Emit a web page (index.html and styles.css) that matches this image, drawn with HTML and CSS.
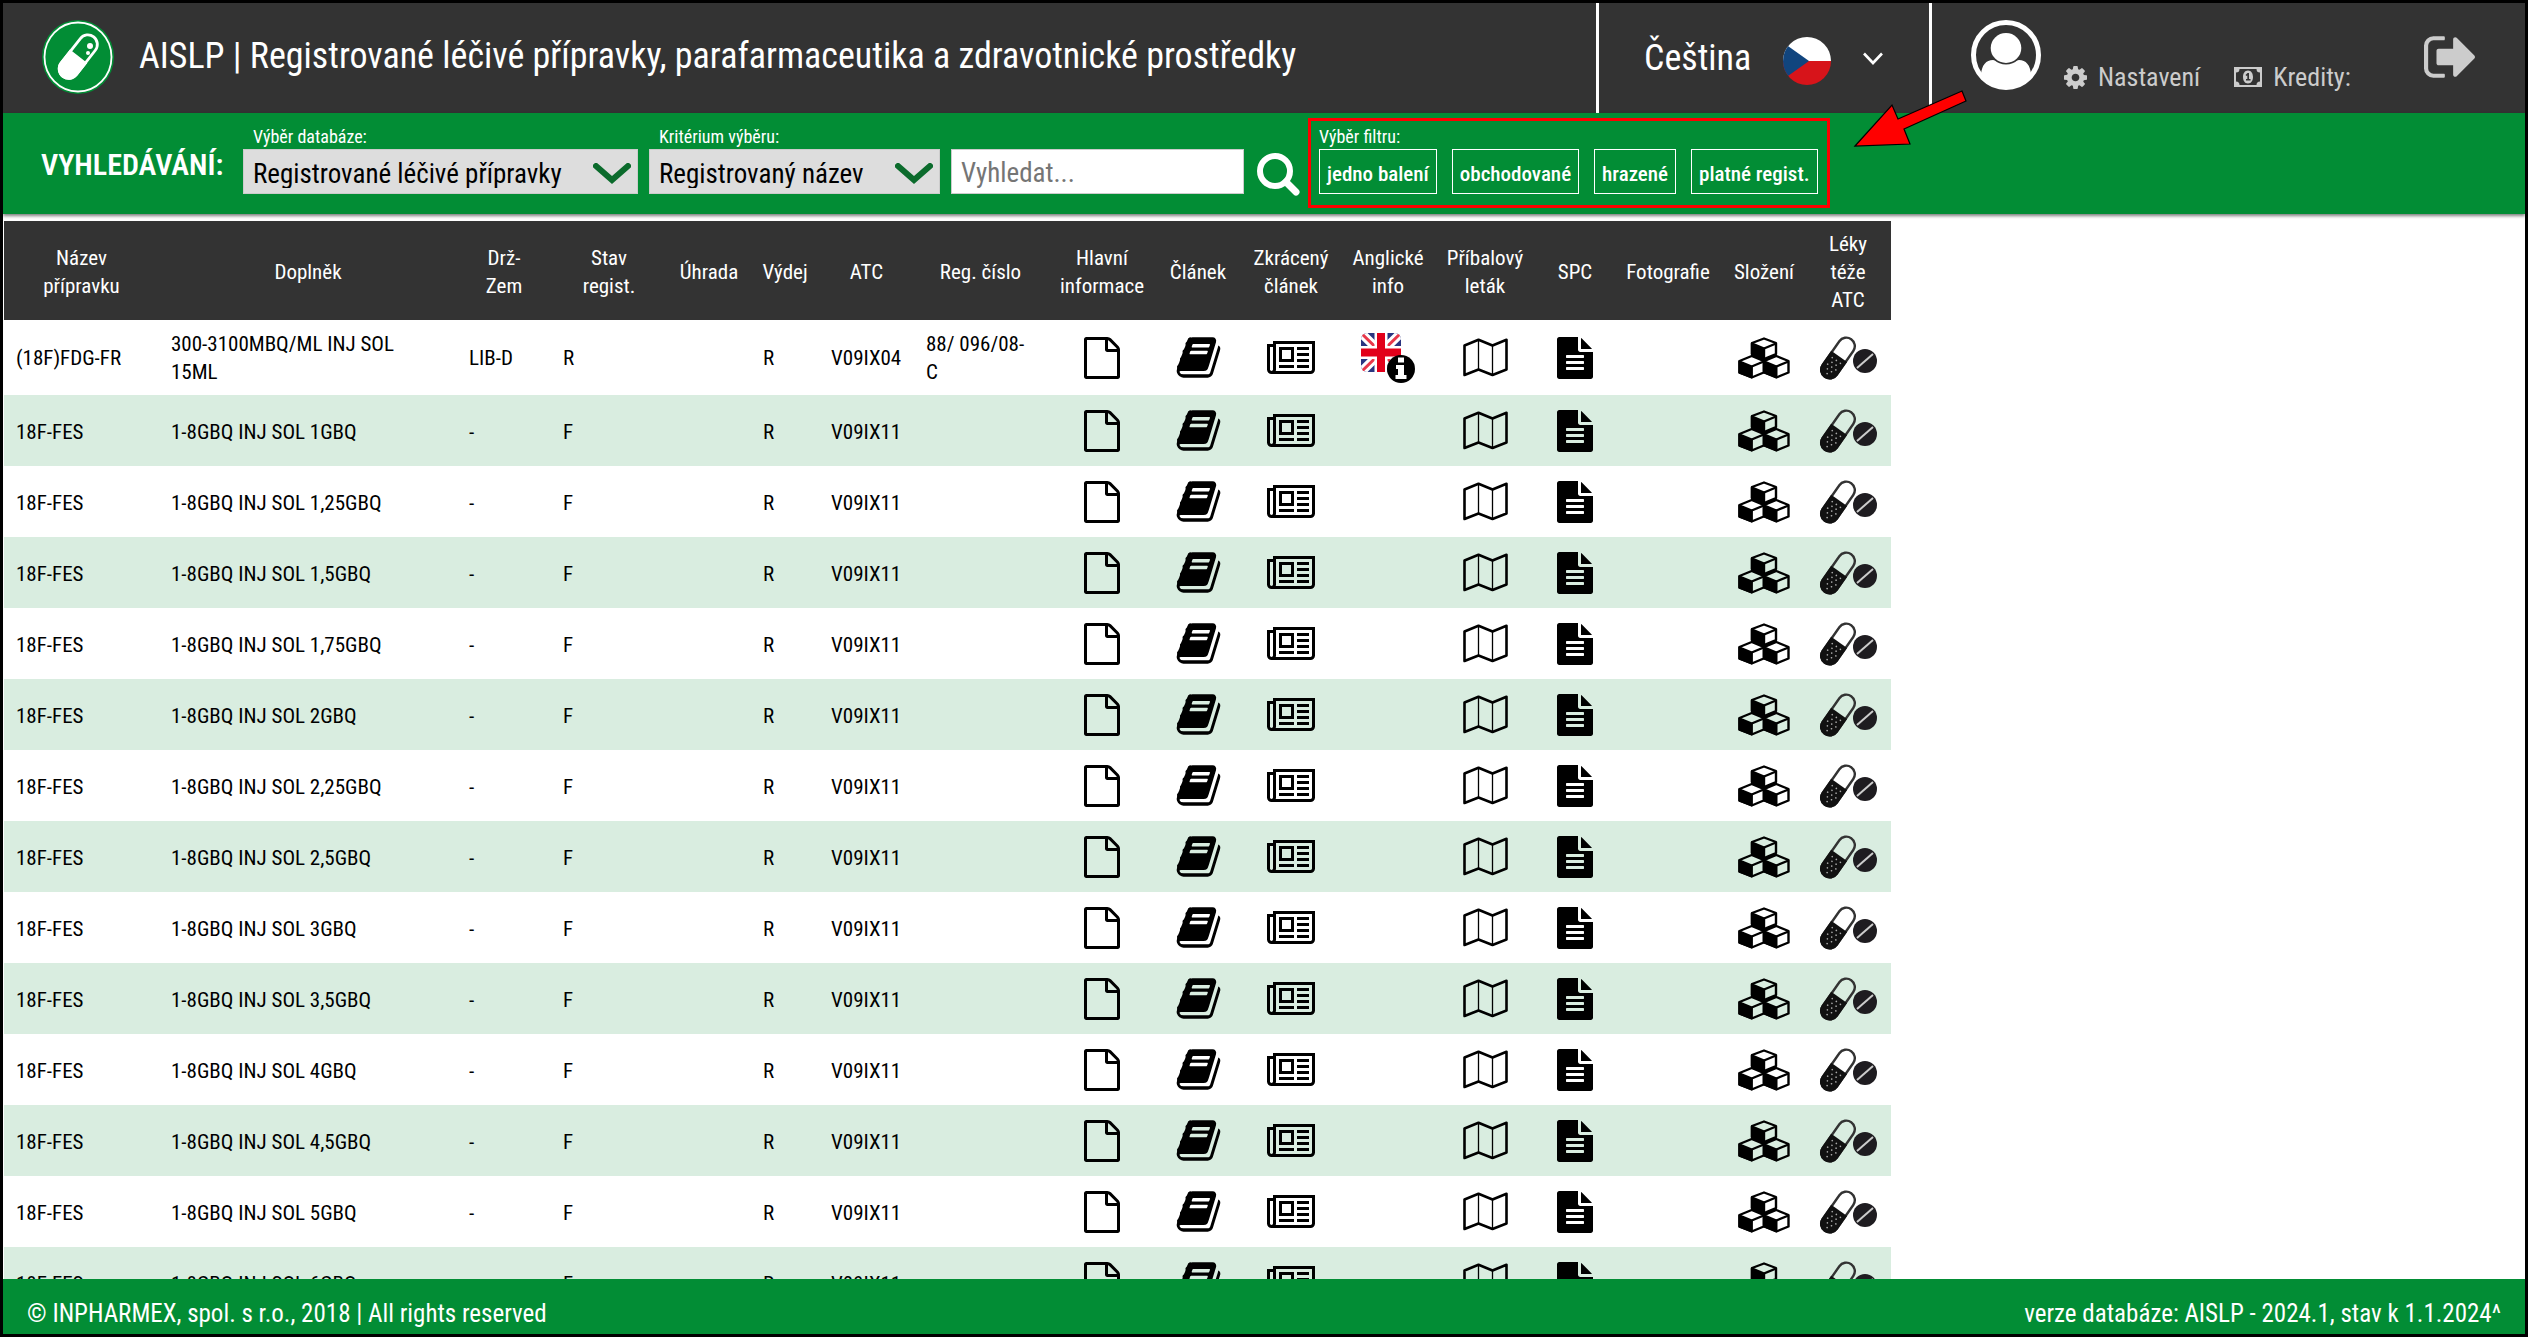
FILE: index.html
```html
<!DOCTYPE html>
<html lang="cs">
<head>
<meta charset="utf-8">
<meta name="viewport" content="width=device-width, initial-scale=1">
<title>AISLP</title>
<link rel="stylesheet" href="styles.css">
</head>
<body>
<svg class="sprite" aria-hidden="true">
  <symbol id="i-file" viewBox="128 0 1536 1792"><path d="M1596 380q28 28 48 76t20 88v1152q0 40-28 68t-68 28h-1344q-40 0-68-28t-28-68v-1600q0-40 28-68t68-28h896q40 0 88 20t76 48zm-444-244v376h376q-10-29-22-41l-313-313q-12-12-41-22zm384 1528v-1024h-416q-40 0-68-28t-28-68v-416h-768v1536h1280z"/></symbol>
  <symbol id="i-text" viewBox="128 0 1536 1792"><path d="M1596 476q14 14 28 36h-472v-472q22 14 36 28zm-476 164h544v1056q0 40-28 68t-68 28h-1344q-40 0-68-28t-28-68v-1600q0-40 28-68t68-28h800v544q0 40 28 68t68 28zm160 736v-64q0-14-9-23t-23-9h-704q-14 0-23 9t-9 23v64q0 14 9 23t23 9h704q14 0 23-9t9-23zm0-256v-64q0-14-9-23t-23-9h-704q-14 0-23 9t-9 23v64q0 14 9 23t23 9h704q14 0 23-9t9-23zm0-256v-64q0-14-9-23t-23-9h-704q-14 0-23 9t-9 23v64q0 14 9 23t23 9h704q14 0 23-9t9-23z"/></symbol>
  <symbol id="i-book" viewBox="0 0 1792 1792"><path d="M1703 478q40 57 18 129l-275 906q-19 64-76.500 107.500t-122.500 43.500h-923q-77 0-148.500-53.500t-99.500-131.500q-24-67-2-127 0-4 3-27t4-37q1-8-3-21.500t-3-19.500q2-11 8-21t16.500-23.500 16.500-23.500q23-38 45-91.500t30-91.500q3-10 .5-30t-.5-28q3-11 17-28t17-23q21-36 42-92t25-90q1-9-2.500-32t.5-28q4-13 22-30.500t22-22.500q19-26 42.500-84.500t27.500-96.500q1-8-3-25.500t-2-26.500q2-8 9-18t18-23 17-21q8-12 16.500-30.500t15-35 16-36 19.500-32 26.500-23.500 36-11.500 47.500 5.500l-1 3q38-9 51-9h761q74 0 114 56t18 130l-274 906q-36 119-71.500 153.500t-128.500 34.500h-869q-27 0-38 15-11 16-1 43 24 70 144 70h923q29 0 56-15.500t35-41.500l300-987q7-22 5-57 38 15 59 43zm-1064 2q-4 13 2 22.500t20 9.500h608q13 0 25.500-9.500t16.500-22.500l21-64q4-13-2-22.500t-20-9.500h-608q-13 0-25.500 9.500t-16.500 22.500zm-83 256q-4 13 2 22.500t20 9.500h608q13 0 25.500-9.500t16.500-22.500l21-64q4-13-2-22.500t-20-9.500h-608q-13 0-25.500 9.500t-16.500 22.500z"/></symbol>
  <symbol id="i-news" viewBox="0 256 2048 1408"><path d="M1024 640h-384v384h384v-384zm128 640v128h-640v-128h640zm0-768v640h-640v-640h640zm640 768v128h-512v-128h512zm0-256v128h-512v-128h512zm0-256v128h-512v-128h512zm0-256v128h-512v-128h512zm-1536 960v-960h-128v960q0 26 19 45t45 19 45-19 19-45zm1664 0v-1088h-1536v1088q0 33-11 64h1483q26 0 45-19t19-45zm128-1216v1216q0 80-56 136t-136 56h-1664q-80 0-136-56t-56-136v-1088h256v-128h1792z"/></symbol>
  <symbol id="i-map" viewBox="0 0 45 39"><path d="M1.500 7.500 15.500 1.800 29.500 7.500 43.500 1.800V31.500L29.500 37 15.500 31.500 1.500 37Z" fill="none" stroke="currentColor" stroke-width="2.600" stroke-linejoin="round"/><path d="M15.500 2V31M29.500 8V37" stroke="currentColor" stroke-width="1.300"/></symbol>
  <symbol id="i-cubes" viewBox="0 0 52 42"><g stroke="currentColor" stroke-width="2.400" stroke-linejoin="round"><path fill="none" d="M26 1.500 38 6V17L26 22 14 17V6ZM13.700 19 25.700 24V35.500L13.700 40.500 1.500 35.500V24ZM38.300 19 50.500 24V35.500L38.300 40.500 26.300 35.500V24Z"/><path d="M14 6.500 26 11.500V21.500L14 17ZM1.500 24.500 13.700 29.500V40L1.500 35.500ZM26.300 24.500 38.300 29.500V40L26.300 35.500Z"/><path fill="none" d="M26 11.500 38 6.500M13.700 29.500 25.700 24.500M38.300 29.500 50.500 24.500"/></g></symbol>
  <symbol id="i-pills" viewBox="0 0 58 44"><g transform="rotate(35 19 22)"><rect x="10.500" y="-1" width="17" height="46" rx="8.500" fill="none" stroke="#333" stroke-width="2.400"/><path d="M9.300 20H28.700V36.500A9.700 9.700 0 0 1 9.300 36.500Z" fill="#111"/><path d="M14 25h.1M19 25h.1M24 25h.1M16.500 29h.1M21.500 29h.1M14 33h.1M19 33h.1M24 33h.1M16.500 37h.1M21.500 37h.1M19 41h.1" stroke="#aaa" stroke-width="1.600" stroke-linecap="round"/></g><circle cx="46" cy="25" r="12" fill="#1e1c20"/><path d="M38 32 54 18" stroke="#ccc" stroke-width="2"/></symbol>
  <symbol id="i-english" viewBox="0 0 54 50"><clipPath id="uk"><rect width="40" height="39" rx="6"/></clipPath><g clip-path="url(#uk)"><path fill="#2a3580" d="M0 0h40v39H0z"/><path d="M0 0 40 39M40 0 0 39" stroke="#fff" stroke-width="9"/><path d="M0 0 40 39M40 0 0 39" stroke="#e8384a" stroke-width="3"/><path d="M20 0V39M0 19.500H40" stroke="#fff" stroke-width="13"/><path d="M20 0V39M0 19.500H40" stroke="#e2001a" stroke-width="8"/></g><circle cx="40" cy="36" r="14" fill="#000"/><path d="M37 24.500h6v5h-6zM35 32h8v10h2.500v4h-11v-4H37v-6h-2z" fill="#fff"/></symbol>
  <symbol id="i-cog" viewBox="128 128 1536 1536"><path d="M1152 896q0-106-75-181t-181-75-181 75-75 181 75 181 181 75 181-75 75-181zm512-109v222q0 12-8 23t-20 13l-185 28q-19 54-39 91 35 50 107 138 10 12 10 25t-9 23q-27 37-99 108t-94 71q-12 0-26-9l-138-108q-44 23-91 38-16 136-29 186-7 28-36 28h-222q-14 0-24.500-8.500t-11.500-21.500l-28-184q-49-16-90-37l-141 107q-10 9-25 9-14 0-25-11-126-114-165-168-7-10-7-23 0-12 8-23 15-21 51-66.500t54-70.500q-27-50-41-99l-183-27q-13-2-21-12.500t-8-23.500v-222q0-12 8-23t19-13l186-28q14-46 39-92-40-57-107-138-10-12-10-24 0-10 9-23 26-36 98.500-107.500t94.500-71.500q13 0 26 10l138 107q44-23 91-38 16-136 29-186 7-28 36-28h222q14 0 24.500 8.500t11.500 21.500l28 184q49 16 90 37l142-107q9-9 24-9 13 0 25 10 129 119 165 170 7 8 7 22 0 12-8 23-15 21-51 66.500t-54 70.500q26 50 41 98l183 28q13 2 21 12.500t8 23.500z"/></symbol>
  <symbol id="i-money" viewBox="0 0 28 20"><path fill-rule="evenodd" d="M0 0h28v20H0zM5.500 2A3.500 3.500 0 0 1 2 5.500v9A3.500 3.500 0 0 1 5.500 18h17a3.500 3.500 0 0 1 3.500-3.500v-9A3.500 3.500 0 0 1 22.500 2z"/><path fill-rule="evenodd" d="M14 3.500c3.200 0 5 2.900 5 6.500s-1.800 6.500-5 6.500-5-2.900-5-6.500 1.800-6.500 5-6.500zM13.500 6 11.500 8l1 1 .8-.6V12H12v1.500h4.500V12H15V6z"/></symbol>
  <symbol id="i-out" viewBox="64 256 1568 1280"><path d="M704 1440q0 4 1 20t.5 26.500-3 23.500-10 19.500-20.500 6.500h-320q-119 0-203.500-84.500t-84.500-203.500v-704q0-119 84.500-203.500t203.500-84.500h320q13 0 22.500 9.500t9.500 22.500q0 4 1 20t.5 26.500-3 23.500-10 19.500-20.500 6.500h-320q-66 0-113 47t-47 113v704q0 66 47 113t113 47h312l11.500 1 11.500 3 8 5.500 7 9 2 13.500zm928-544q0 26-19 45l-544 544q-19 19-45 19t-45-19-19-45v-288h-448q-26 0-45-19t-19-45v-384q0-26 19-45t45-19h448v-288q0-26 19-45t45-19 45 19l544 544q19 19 19 45z"/></symbol>
</svg>

<header class="top">
  <svg class="logo" viewBox="0 0 74 76" role="img" aria-label="AISLP"><ellipse cx="37" cy="38" rx="36" ry="37" fill="#028d35"/><ellipse cx="37" cy="38" rx="33.500" ry="34.500" fill="none" stroke="#fff" stroke-width="1.800"/><g transform="rotate(38 37 38)"><rect x="27.500" y="12.500" width="19" height="50" rx="9.500" fill="none" stroke="#fff" stroke-width="2.800"/><path d="M26 37H48V53A11 11 0 0 1 26 53Z" fill="#fff"/></g><circle cx="49" cy="27" r="3" fill="#fff"/><circle cx="47" cy="34" r="2" fill="#fff"/></svg>
  <h1 class="title">AISLP | Registrované léčivé přípravky, parafarmaceutika a zdravotnické prostředky</h1>
  <button class="language" type="button">
    <span>Čeština</span>
    <svg class="flag" viewBox="0 0 48 48" aria-hidden="true"><clipPath id="cz"><circle cx="24" cy="24" r="24"/></clipPath><g clip-path="url(#cz)"><path fill="#fff" d="M0 0h48v24H0z"/><path fill="#d7141a" d="M0 24h48v24H0z"/><path fill="#11457e" d="M-2 4 26 24-2 44z"/></g></svg>
    <svg class="caret" viewBox="0 0 20 13" aria-hidden="true"><path d="M1 1.500 10 11 19 1.500" fill="none" stroke="#fff" stroke-width="2.600"/></svg>
  </button>
  <div class="account">
    <svg class="avatar" viewBox="0 0 70 70" role="img" aria-label="Uživatel"><clipPath id="av"><circle cx="35" cy="35" r="33"/></clipPath><circle cx="35" cy="35" r="32.500" fill="none" stroke="#fff" stroke-width="5"/><g clip-path="url(#av)"><path d="M10 54C11 45 15 40 22 40c3 0 6 3.500 13 3.500S45 40 48 40c7 0 11 5 12 14V72H10Z" fill="#fff"/></g><ellipse cx="35" cy="28" rx="17" ry="16.500" fill="#333"/><ellipse cx="35" cy="28" rx="15.300" ry="15" fill="#fff"/></svg>
    <a class="account-link" href="#nastaveni"><svg class="cog"><use href="#i-cog"/></svg>Nastavení</a>
    <a class="account-link" href="#kredity"><svg class="money"><use href="#i-money"/></svg>Kredity:</a>
  </div>
  <button class="logout" type="button" aria-label="Odhlásit"><svg><use href="#i-out"/></svg></button>
</header>

<form class="search">
  <h2 class="search-title">VYHLEDÁVÁNÍ:</h2>
  <div class="field database">
    <label for="database">Výběr databáze:</label>
    <div class="select"><select id="database"><option>Registrované léčivé přípravky</option></select><svg viewBox="0 0 38 21" aria-hidden="true"><path d="M3 3 19 17 35 3" fill="none" stroke="#0b6b2c" stroke-width="6" stroke-linecap="round"/></svg></div>
  </div>
  <div class="field criterion">
    <label for="criterion">Kritérium výběru:</label>
    <div class="select"><select id="criterion"><option>Registrovaný název</option></select><svg viewBox="0 0 38 21" aria-hidden="true"><path d="M3 3 19 17 35 3" fill="none" stroke="#0b6b2c" stroke-width="6" stroke-linecap="round"/></svg></div>
  </div>
  <input class="query" type="text" placeholder="Vyhledat..." aria-label="Vyhledat">
  <button class="go" type="submit" aria-label="Hledat"><svg viewBox="0 0 43 43"><circle cx="18" cy="18" r="15" fill="none" stroke="#fff" stroke-width="6"/><path d="M29 29 39 39" stroke="#fff" stroke-width="7" stroke-linecap="round"/></svg></button>
  <fieldset class="filters">
    <legend>Výběr filtru:</legend>
    <div class="filter-row">
      <button type="button">jedno balení</button>
      <button type="button">obchodované</button>
      <button type="button">hrazené</button>
      <button type="button">platné regist.</button>
    </div>
    <svg class="arrow" viewBox="0 0 114 60" aria-hidden="true"><path d="M2 57 39 16 45 30 109 2 113 12 51 40 57 55Z" fill="#f00" stroke="#000" stroke-width="1.200"/></svg>
  </fieldset>
</form>

<main class="results">
  <table>
    <colgroup><col class="c155"><col class="c298"><col class="c94"><col class="c116"><col class="c84"><col class="c68"><col class="c95"><col class="c133"><col class="c110"><col class="c82"><col class="c104"><col class="c90"><col class="c104"><col class="c76"><col class="c110"><col class="c82"><col class="c86"></colgroup>
    <thead>
      <tr><th>Název<br>přípravku</th><th>Doplněk</th><th>Drž-<br>Zem</th><th>Stav<br>regist.</th><th>Úhrada</th><th>Výdej</th><th>ATC</th><th>Reg. číslo</th><th>Hlavní<br>informace</th><th>Článek</th><th>Zkrácený<br>článek</th><th>Anglické<br>info</th><th>Příbalový<br>leták</th><th>SPC</th><th>Fotografie</th><th>Složení</th><th>Léky<br>téže<br>ATC</th></tr>
    </thead>
    <tbody id="rows"></tbody>
  </table>
</main>

<footer class="bottom">
  <span>© INPHARMEX, spol. s r.o., 2018 | All rights reserved</span>
  <span>verze databáze: AISLP - 2024.1, stav k 1.1.2024^</span>
</footer>
<script src="rows.js"></script>
</body>
</html>
```
FILE: rows.js
```js
const drugs = [
  ['(18F)FDG-FR', '300-3100MBQ/ML INJ SOL<br>15ML', 'LIB-D', 'R', '', 'R', 'V09IX04', '88/ 096/08-<br>C'],
  ...['1', '1,25', '1,5', '1,75', '2', '2,25', '2,5', '3', '3,5', '4', '4,5', '5', '6'].map(
    dose => ['18F-FES', `1-8GBQ INJ SOL ${dose}GBQ`, '-', 'F', '', 'R', 'V09IX11', '']
  )
];
const icons = [
  ['file', 'Hlavní informace'], ['book', 'Článek'], ['news', 'Zkrácený článek'],
  ['english', 'Anglické info'], ['map', 'Příbalový leták'], ['text', 'SPC'],
  null, ['cubes', 'Složení'], ['pills', 'Léky téže ATC']
];
document.getElementById('rows').innerHTML = drugs.map((drug, i) => {
  const texts = drug.map(t => `<td>${t}</td>`).join('');
  const links = icons.map(icon => {
    if (!icon || (icon[0] === 'english' && i > 0)) return '<td></td>';
    return `<td class="icon"><a href="#${icon[0]}" aria-label="${icon[1]}"><svg class="${icon[0]}"><use href="#i-${icon[0]}"/></svg></a></td>`;
  }).join('');
  return `<tr>${texts}${links}</tr>`;
}).join('');
```
FILE: styles.css
```css
* { box-sizing: border-box; }

body {
  margin: 0;
  height: 100vh;
  border: 3px solid #000;
  display: flex;
  flex-direction: column;
  background: #fff;
  color: #000;
  font-family: "Roboto Condensed", Roboto, sans-serif;
  font-size: 21px;
  line-height: 28px;
}

h1, h2 { margin: 0; font-weight: 400; }
svg { display: block; fill: currentColor; }
button, select, input { font: inherit; color: inherit; margin: 0; border-radius: 0; }
button { background: none; border: 0; padding: 0; cursor: pointer; }
a { color: inherit; text-decoration: none; }
.sprite { position: absolute; width: 0; height: 0; }

/* Top bar */
.top {
  flex: none;
  display: flex;
  align-items: center;
  height: 110px;
  padding-left: 38px;
  background: #333;
  color: #fff;
}
.logo { width: 74px; height: 76px; flex: none; margin-bottom: 2px; }
.title {
  flex: 1;
  margin: 0 0 4px 24px;
  font-size: 36px;
  line-height: 44px;
  white-space: nowrap;
}
.language {
  align-self: stretch;
  width: 336px;
  padding-left: 45px;
  display: flex;
  align-items: center;
  border: solid #fff;
  border-width: 0 3px;
  font-size: 36px;
}
.flag { width: 48px; height: 48px; margin: 6px 32px 0 32px; }
.caret { width: 20px; height: 13px; }
.account {
  width: 492px;
  align-self: stretch;
  display: flex;
  align-items: flex-start;
  padding: 17px 0 0 39px;
  color: #ccc;
}
.avatar { width: 70px; height: 70px; margin-right: 23px; }
.account-link {
  display: flex;
  align-items: center;
  gap: 11px;
  margin: 43px 34px 0 0;
  font-size: 26px;
}
.cog { width: 23px; height: 23px; }
.money { width: 28px; height: 20px; }
.logout { width: 101px; padding-bottom: 2px; color: #ccc; }
.logout svg { width: 51px; height: 42px; }

/* Search bar */
.search {
  flex: none;
  position: relative;
  z-index: 1;
  display: flex;
  align-items: flex-start;
  height: 101px;
  padding: 5px 0 0 38px;
  background: #028d35;
  color: #fff;
  box-shadow: 0 2px 3px rgba(0, 0, 0, .5);
}
.search-title {
  width: 202px;
  padding-top: 27px;
  font-size: 30px;
  line-height: 40px;
  font-weight: 600;
}
.field { margin-right: 11px; }
.field label, .filters legend {
  display: block;
  height: 31px;
  padding: 9px 0 0 10px;
  font-size: 18px;
  line-height: 20px;
}
.database { width: 395px; }
.criterion { width: 291px; }
.select { position: relative; color: #000; }
.select select {
  display: block;
  appearance: none;
  width: 100%;
  height: 45px;
  padding: 4px 9px 0;
  border: 1px solid #ccc;
  background: #ddd;
  font-size: 27px;
}
.select svg {
  position: absolute;
  right: 7px;
  top: 14px;
  width: 38px;
  height: 21px;
  pointer-events: none;
}
.query {
  width: 293px;
  height: 45px;
  margin-top: 31px;
  padding: 2px 9px 0;
  border: 1px solid #ccc;
  background: #fff;
  color: #000;
  font-size: 27px;
}
.query::placeholder { color: #757575; opacity: 1; }
.go { margin: 35px 8px 0 13px; }
.go svg { width: 43px; height: 43px; }
.filters {
  position: relative;
  min-width: 0;
  height: 90px;
  margin: 0;
  padding: 0 9px 0 8px;
  border: 3px solid #f00;
}
.filters legend { float: left; height: 28px; padding: 6px 0 0; }
.filter-row { clear: both; display: flex; gap: 15px; }
.filter-row button {
  height: 45px;
  padding: 4px 7px 0;
  border: 1px solid #fff;
  font-weight: 500;
}
.arrow {
  position: absolute;
  left: 542px;
  top: -32px;
  width: 114px;
  height: 60px;
}

/* Results */
.results {
  flex: 1;
  min-height: 0;
  overflow: hidden;
  padding: 7px 1px 0;
}
table { width: 1887px; table-layout: fixed; border-collapse: collapse; }
thead { background: #333; color: #fff; }
th { height: 99px; padding: 2px 4px 0; font-weight: 400; }
td { height: 71px; padding: 2px 12px 0; }
tbody tr:first-child td { height: 75px; padding-top: 0; }
tbody tr:nth-child(even) { background: #d9ede0; }
td.icon { padding: 0; }
td.icon svg { margin: 0 auto; }
.file, .text { width: 36px; height: 42px; }
.book { width: 47px; height: 47px; }
.news { width: 48px; height: 33px; }
.map { width: 45px; height: 39px; }
.cubes { width: 52px; height: 42px; }
.pills { width: 58px; height: 44px; }
.english { width: 54px; height: 50px; }
.c155 { width: 155px; }
.c298 { width: 298px; }
.c94 { width: 94px; }
.c116 { width: 116px; }
.c84 { width: 84px; }
.c68 { width: 68px; }
.c95 { width: 95px; }
.c133 { width: 133px; }
.c110 { width: 110px; }
.c82 { width: 82px; }
.c104 { width: 104px; }
.c90 { width: 90px; }
.c76 { width: 76px; }
.c86 { width: 86px; }

/* Footer */
.bottom {
  flex: none;
  display: flex;
  justify-content: space-between;
  height: 55px;
  padding: 21px 24px 0;
  background: #028d35;
  color: #fff;
  font-size: 25px;
}
```
